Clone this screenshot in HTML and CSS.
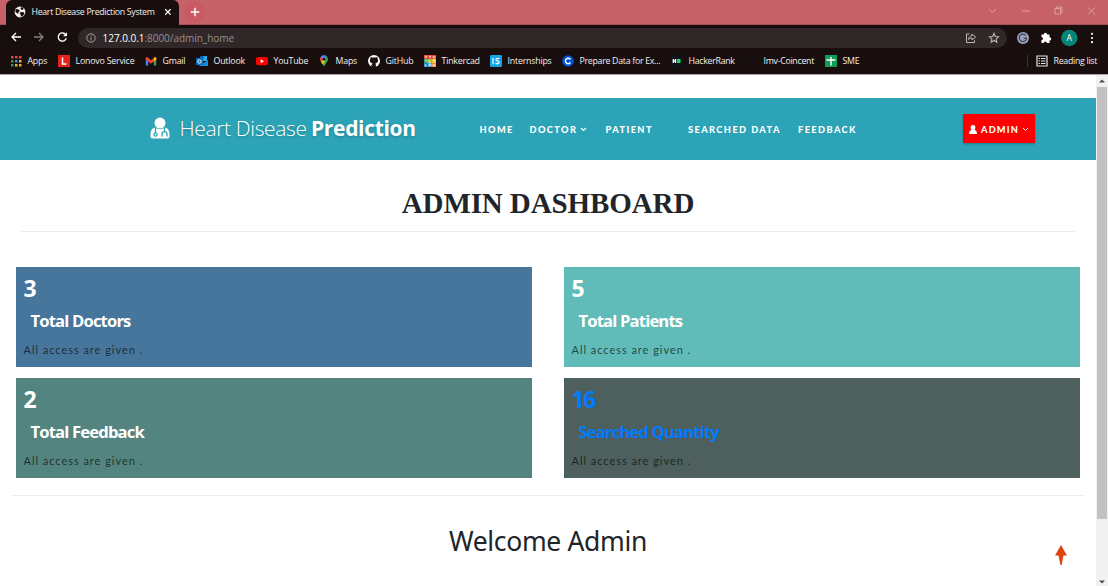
FILE: index.html
```html
<!DOCTYPE html>
<html lang="en">
<head>
<meta charset="utf-8">
<title>Heart Disease Prediction System</title>
<link rel="stylesheet" href="styles.css">
</head>
<body>
<header class="browser">
  <div class="tabstrip">
    <div class="tab">
      <svg class="globe" viewBox="0 0 12 12"><circle cx="6" cy="6" r="5.4" fill="#f3f1f1"/><path d="M2 3.1l2.8.5 1.1 1.5-1.5 1.3-.4 1.3L2 6.5l-.8-1.6zM7 1.1l2.6 1.1-.6 1.5H7.3l-.8-1zM6.3 6.3l3-.3 1.2 1.4L8.8 10l-1.9.7-.2-2.1-1.1-1z" fill="#180e0d"/></svg>
      <span class="tab-title">Heart Disease Prediction System</span>
      <svg class="tab-close" viewBox="0 0 8 8"><path d="M1.2 1.2l5.4 5.4M6.6 1.2L1.2 6.6" stroke="#fff" stroke-width="1.3"/></svg>
    </div>
    <div class="newtab"><svg viewBox="0 0 10 10"><path d="M5 .7v8.6M.7 5h8.6" stroke="#fff" stroke-width="1.5"/></svg></div>
    <svg class="window-buttons" viewBox="0 0 110 14" fill="none" stroke="#dfa0a2"><path d="M1 5l3.500 3.500L8 5M34 7h8M67 4.500h5.500v5.500H67zM68.500 4.500V3h5.500v5.500h-1.500M100 3.500l7 7M107 3.500l-7 7"/></svg>
  </div>
  <div class="toolbar">
    <svg class="nav-icons" viewBox="0 0 60 14" fill="none" stroke-width="1.300"><path d="M11 7H2M6 3L2 7l4 4" stroke="#fff"/><path d="M24 7h9M29 3l4 4-4 4" stroke="#858080"/><path d="M55.800 4.800A4.100 4.100 0 1 0 56.300 8.300" stroke="#fff"/><path d="M57 2.300v4h-4z" fill="#fff"/></svg>
    <div class="omnibox">
      <svg class="info" viewBox="0 0 10 10" fill="none" stroke="#a49f9f"><circle cx="5" cy="5" r="4.200"/><path d="M5 4.500v3M5 2.400v1.100"/></svg>
      <span class="url"><b>127.0.0.1</b>:8000/admin_home</span>
      <svg class="omni-icons" viewBox="0 0 36 12" fill="none" stroke="#bdb8b8"><path d="M4.500 2H1.500v8.500h8V8.300M3.500 7.500c.3-2.500 1.500-3.600 3.500-3.700V2l3.700 3L7 8V6C5.400 6 4.400 6.500 3.500 7.500z"/><path d="M29 1.500l1.300 3 3.200.3-2.400 2.200.7 3.200L29 8.500l-2.800 1.700.7-3.200-2.400-2.200 3.200-.3z" stroke-width="1.100"/></svg>
    </div>
    <svg class="ext-icons" viewBox="0 0 90 18"><circle cx="8" cy="9" r="6" fill="#9ba2c0"/><path d="M10.800 6.500a3.700 3.700 0 1 0 .8 2.700H8.500" fill="none" stroke="#3e3c4b" stroke-width="1.200"/><path d="M26.500 5.500h2.200a1.700 1.700 0 0 1 3.400 0h2.400v2.700a1.700 1.700 0 0 1 0 3.400V14h-2.600a1.600 1.600 0 0 0-3.200 0h-2.200v-2.900a1.500 1.500 0 0 0 0-3z" fill="#fff"/><circle cx="54.300" cy="9" r="8.200" fill="#068577"/><text x="54.300" y="12" class="avatar">A</text><g fill="#fff"><circle cx="77" cy="4.800" r="1.100"/><circle cx="77" cy="9" r="1.100"/><circle cx="77" cy="13.200" r="1.100"/></g></svg>
  </div>
  <nav class="bookmarks">
    <div class="bm"><svg viewBox="0 0 12 12"><g><path d="M1 1h2.500v2.500H1zM5 1h2.500v2.500H5zM9 1h2.500v2.500H9z" fill="#dc4a3d"/><path d="M1 5h2.500v2.500H1z" fill="#2a9d52"/><path d="M5 5h2.500v2.500H5z" fill="#4287ed"/><path d="M9 5h2.500v2.500H9zM5 9h2.500v2.500H5z" fill="#e9b52c"/><path d="M1 9h2.500v2.500H1z" fill="#2a9d52"/><path d="M9 9h2.500v2.500H9z" fill="#e9b52c"/></g></svg><span>Apps</span></div>
    <div class="bm"><svg viewBox="0 0 12 12"><path d="M0 0h12v12H0z" fill="#e2231a"/><path d="M4.500 2.500v6.500h4" fill="none" stroke="#fff" stroke-width="1.500"/></svg><span>Lonovo Service</span></div>
    <div class="bm"><svg viewBox="0 0 12 12"><path d="M.8 2.500v8h2.400V4z" fill="#4285f4"/><path d="M11.200 2.500v8H8.800V4z" fill="#34a853"/><path d="M.8 4.800V2.500l1.300-.5L6 5.200 9.900 2l1.300.5v2.300L6 8.700z" fill="#ea4335"/><path d="M8.800 3l1.500-1 .9.700v2.100L8.800 6.500z" fill="#fbbc04"/></svg><span>Gmail</span></div>
    <div class="bm"><svg viewBox="0 0 12 12"><path d="M4 1h7v5H4z" fill="#28a8ea"/><path d="M3.500 5l4 3 4.500-3v6H3.500z" fill="#1490df"/><path d="M4 1h3.500v3H4z" fill="#0364b8"/><path d="M0 3h7v7H0z" fill="#0f6cbd"/><circle cx="3.500" cy="6.500" r="1.700" fill="none" stroke="#fff"/></svg><span>Outlook</span></div>
    <div class="bm"><svg viewBox="0 0 12 12"><rect y="2" width="12" height="8.300" rx="2.300" fill="#f00"/><path d="M4.700 4.200l3.300 2-3.300 2z" fill="#fff"/></svg><span>YouTube</span></div>
    <div class="bm"><svg viewBox="0 0 12 12"><path d="M2 4.300A4 4 0 0 1 8.700 1.500L3 7z" fill="#4285f4"/><path d="M2 4.300L3.200 7 6 4.200 3.200 1.500A4 4 0 0 0 2 4.300z" fill="#ea4335"/><path d="M3.200 7l5.600-5.400A4 4 0 0 1 9.500 6L6 11.500z" fill="#34a853"/><path d="M3 7l2.300-2.600L7 6 5 9.700z" fill="#fbbc04"/><path d="M3 1.500A4 4 0 0 1 8.700 1.500L6 4.200z" fill="#4285f4"/><circle cx="6" cy="4.200" r="1.300" fill="#180e0d"/></svg><span>Maps</span></div>
    <div class="bm"><svg viewBox="0 0 12 12"><circle cx="6" cy="6" r="6" fill="#fff"/><path d="M4.200 12V9.900c-1.500.2-1.800-.8-2.200-1.200M7.800 12V9.300c0-.5-.2-.8-.4-1 3.400-.4 3-4 2-4.900.2-.7 0-1.200-.1-1.500-.7 0-1.300.4-1.700.7a6 6 0 0 0-3.200 0C4 2.300 3.400 1.900 2.700 1.900c-.1.300-.3.800-.1 1.500-1 .9-1.400 4.500 2 4.900-.3.300-.4.600-.4 1V12z" fill="#180e0d"/></svg><span>GitHub</span></div>
    <div class="bm"><svg viewBox="0 0 12 12"><path d="M0 0h12v4H0z" fill="#e84c36"/><path d="M0 4h4v4H0z" fill="#26a568"/><path d="M4 4h4v4H4z" fill="#a4bc38"/><path d="M8 4h4v4H8z" fill="#e7c02c"/><path d="M0 8h4v4H0z" fill="#2d82bf"/><path d="M4 8h4v4H4z" fill="#49a9df"/><path d="M8 8h4v4H8z" fill="#f08838"/><path d="M1 1.300h2M2 1.300v2M5 1.300h2M6 1.300v2M9.300 1v2.300M10.800 1v2.300M1 5.500h2v2M5.300 5v2.300h1.400M9 5.500h2v2M1.300 9v2h1.500M5.300 11V9h1.400v2M9.300 9v2h1.500V9" fill="none" stroke="#fff" stroke-width=".7"/></svg><span>Tinkercad</span></div>
    <div class="bm"><svg viewBox="0 0 12 12"><rect width="12" height="12" rx="1.300" fill="#13a3e6"/><path d="M3 3v6.300M9.200 4C8 2.800 5.800 3.300 5.900 4.700c.1 1.500 3.300 1 3.200 2.800-.1 1.500-2.500 1.700-3.500.5" fill="none" stroke="#fff" stroke-width="1.200"/></svg><span>Internships</span></div>
    <div class="bm"><svg viewBox="0 0 12 12"><circle cx="6" cy="6" r="5.800" fill="#0056d2"/><path d="M8.400 4.500a2.700 2.700 0 1 0 0 3" fill="none" stroke="#fff" stroke-width="1.500"/></svg><span class="tight">Prepare Data for Ex...</span></div>
    <div class="bm"><svg viewBox="0 0 12 12"><path d="M0 0h12v12H0z" fill="#0e141e"/><path d="M2.300 4v4M4.500 4v4M2 6h3" stroke="#fff" stroke-width="1.300"/><path d="M6 4h3.500v4H6z" fill="#1ed760"/></svg><span class="tight">HackerRank</span></div>
    <div class="bm"><svg viewBox="0 0 12 12"><path d="M2 3h2v1H2zM5 3h3v1H5z" fill="#111b35"/></svg><span class="tight">Imv-Coincent</span></div>
    <div class="bm sme"><svg viewBox="0 0 12 12"><path d="M0 0h12v12H0z" fill="#109d58"/><path d="M6 2v8.500M1.500 5h9" stroke="#fff" stroke-width="1.400"/></svg><span class="tight">SME</span></div>
    <div class="bm reading"><svg viewBox="0 0 12 12" fill="none" stroke="#e5e1e1"><path d="M1 1h10v10H1z" stroke-width="1.200"/><path d="M2.500 3.500h1.500M5 3.500h4.500M2.500 6h1.500M5 6h4.500M2.500 8.500h1.500M5 8.500h4.500"/></svg><span class="tight">Reading list</span></div>
  </nav>
</header>

<div class="viewport">
  <main class="page">
    <div class="navbar">
      <div class="brand">
        <svg viewBox="0 0 20 22"><g fill="#fff"><circle cx="10" cy="6" r="5.500"/><path d="M5 10.500c3 2.300 7 2.300 10 0 3 .5 4.500 3 4.500 6.500v2.500c0 1-1 2-2 2h-15c-1 0-2-1-2-2V17c0-3.500 1.500-6 4.500-6.500z"/></g><g fill="none" stroke="#2ca3b6" stroke-width="1.300"><path d="M5.500 11v5M14.500 11v3.500M12 19.500V17c0-3.300 5-3.300 5 0v2.500"/><circle cx="5.500" cy="17.500" r="1.600"/></g></svg>
        <span class="brand-light">Heart Disease</span><span class="brand-bold">Prediction</span>
      </div>
      <nav class="menu">
        <a class="m-home">HOME</a>
        <a class="m-doctor">DOCTOR<svg class="caret" viewBox="0 0 7 5"><path d="M1 1l2.500 2.500L6 1" fill="none" stroke="#fff" stroke-width="1.200"/></svg></a>
        <a class="m-patient">PATIENT</a>
        <a class="m-search">SEARCHED DATA</a>
        <a class="m-feedback">FEEDBACK</a>
      </nav>
      <a class="admin"><svg class="user" viewBox="0 0 8 10"><path d="M4 0a2.400 2.400 0 0 1 2.400 2.600c0 1-.4 1.800-.8 2.300C7.200 5.200 8 6.500 8 9H0c0-2.500.8-3.800 2.400-4.100-.4-.5-.8-1.300-.8-2.300A2.400 2.400 0 0 1 4 0z" fill="#fff"/></svg><span>ADMIN</span><svg class="caret" viewBox="0 0 7 5"><path d="M1 1l2.500 2.500L6 1" fill="none" stroke="#fff"/></svg></a>
    </div>
    <h1 class="title">ADMIN DASHBOARD</h1>
    <section class="cards">
      <article class="card doctors"><div class="num">3</div><h2>Total Doctors</h2><p>All access are given .</p></article>
      <article class="card patients"><div class="num">5</div><h2>Total Patients</h2><p>All access are given .</p></article>
      <article class="card feedback"><div class="num">2</div><h2>Total Feedback</h2><p>All access are given .</p></article>
      <article class="card searched"><div class="num">16</div><h2>Searched Quantity</h2><p>All access are given .</p></article>
    </section>
    <h2 class="welcome">Welcome Admin</h2>
    <svg class="to-top" viewBox="0 0 12 20"><path d="M6 0l6 10.500H8.500L6.600 20H5.400L3.500 10.500H0z" fill="#dc4411"/></svg>
  </main>
  <div class="scrollbar">
    <svg viewBox="0 0 12 12"><path d="M3 7.500L6 4.500l3 3z" fill="#505050"/></svg>
    <div class="thumb"></div>
    <svg viewBox="0 0 12 12"><path d="M3 4.500l3 3 3-3z" fill="#505050"/></svg>
  </div>
</div>
</body>
</html>
```
FILE: styles.css
```css
* { box-sizing: border-box; }
body { margin: 0; width: 1108px; height: 586px; overflow: hidden; display: flex; flex-direction: column; background: #fff; font-family: "Open Sans", sans-serif; }
svg { display: block; flex: none; }
span, a { white-space: nowrap; }

.browser { height: 75px; background: #180e0d; border-bottom: 1px solid #a9a5a5; color: #f2efef; }
.tabstrip { height: 25px; background: #c66168; border-bottom: 1px solid #a94f55; display: flex; }
.tab { width: 173px; height: 25px; margin-left: 6px; background: #180e0d; border-radius: 6px 6px 0 0; display: flex; align-items: center; padding: 0 0 1px 8px; }
.globe { width: 12px; height: 12px; }
.tab-title { font-size: 8.800px; margin-left: 5.500px; width: 124px; letter-spacing: -0.320px; }
.tab-close { width: 8px; height: 8px; margin-left: 8px; }
.newtab { width: 20px; height: 20px; margin: 2px 0 0 6px; border-radius: 50%; background: #c95a63; display: grid; place-items: center; }
.newtab svg { width: 10px; height: 10px; }
.window-buttons { width: 110px; height: 14px; margin: 4px 10px 0 auto; }

.toolbar { height: 24px; display: flex; align-items: center; padding-top: 1px; }
.nav-icons { width: 60px; height: 14px; margin-left: 10px; margin-top: -1px; }
.omnibox { width: 929px; height: 20px; margin-left: 8px; border-radius: 10px; background: #302728; display: flex; align-items: center; padding-left: 8px; }
.info { width: 10px; height: 10px; }
.url { margin-left: 6.500px; font-size: 10px; color: #969090; letter-spacing: -0.350px; }
.url { letter-spacing: -0.030px; }
.url b { font-weight: 400; color: #fff; }
.omni-icons { width: 36px; height: 12px; margin: 0 6px 0 auto; }
.ext-icons { width: 90px; height: 18px; margin-left: 8px; }
.avatar { font: 8.500px "Open Sans", sans-serif; fill: #fff; text-anchor: middle; }

.bookmarks { height: 25px; padding: 0 0 1px 10px; display: grid; grid-template-columns: 48px 87px 51px 60px 62px 50px 56px 66px 72px 109px 75px 79px 202px 80px; align-items: center; }
.bm { display: flex; align-items: center; gap: 5.500px; font-size: 8.800px; letter-spacing: -0.200px; }
.bm svg { width: 12px; height: 12px; }
.bm .tight { letter-spacing: -0.290px; }
.reading { border-left: 1px solid #3c3233; padding-left: 8px; }

.viewport { flex: 1; display: flex; min-height: 0; }
.page { width: 1096px; position: relative; }
.scrollbar { width: 12px; background: #f1f1f1; display: flex; flex-direction: column; align-items: center; }
.scrollbar svg { width: 12px; height: 12px; }
.scrollbar svg:last-child { margin-top: auto; margin-bottom: -2px; }
.thumb { width: 10px; height: 432px; background: #c1c1c1; }

.navbar { margin-top: 22.500px; height: 62.500px; background: #2ca3b6; display: flex; align-items: center; color: #fff; }
.brand { width: 479.500px; padding: 0 0 2px 150px; display: flex; align-items: center; font-size: 21px; text-shadow: 0 1px 3px rgba(0,0,0,.2); }
.brand svg { width: 20px; height: 22px; margin-right: 9.500px; }
.brand-light { font-weight: 300; width: 131.500px; letter-spacing: -0.350px; }
.brand-bold { font-weight: 700; letter-spacing: -0.330px; }
.menu { width: 483.500px; padding-top: 2px; display: flex; font: 900 9.200px Lato, sans-serif; letter-spacing: 1.430px; }
.menu a, .admin { display: flex; align-items: center; }
.caret { width: 7px; height: 5px; margin-left: 3px; }
.m-home { width: 50px; }
.m-doctor { width: 76px; }
.m-patient { width: 82.500px; }
.m-search { width: 110px; }
.admin { width: 72px; height: 29px; background: #f00; padding: 2px 0 0 6px; font: 900 9.200px Lato, sans-serif; letter-spacing: 1.200px; box-shadow: 0 1px 2px rgba(0,0,0,.25); }
.user { width: 8px; height: 10px; margin-right: 4px; }

.title { margin: 0 21px; height: 72px; padding-top: 26px; border-bottom: 1px solid #ececec; text-align: center; font: 700 29px/34px "Liberation Serif", serif; letter-spacing: -0.100px; color: #212529; }
.cards { margin: 35px 11px 0; padding: 0 5px 17px; display: grid; grid-template-columns: 516px 516px; grid-template-rows: 100px 100px; gap: 11px 32px; border-bottom: 1px solid #eee; }
.card { padding: 5px 0 0 7.500px; color: #fff; }
.doctors { background: #47769c; }
.patients { background: #61bbb9; }
.feedback { background: #54847f; }
.searched { background: #4d605e; color: #007bff; }
.num { font-size: 23px; line-height: 32px; font-weight: 700; letter-spacing: -1.500px; }
.card h2 { margin: 4px 0 0 7px; font-size: 16.600px; line-height: 26px; font-weight: 700; letter-spacing: -0.830px; }
.card p { margin: 8px 0 0; font: 11px/16px Lato, sans-serif; letter-spacing: 0.960px; color: rgba(0,0,0,.65); }
.welcome { margin: 25px 0 0; text-align: center; font: 400 26.500px/40px "Noto Sans", sans-serif; color: #212529; letter-spacing: -0.330px; }
.to-top { position: absolute; left: 1055px; top: 470px; width: 12px; height: 20px; }
```
